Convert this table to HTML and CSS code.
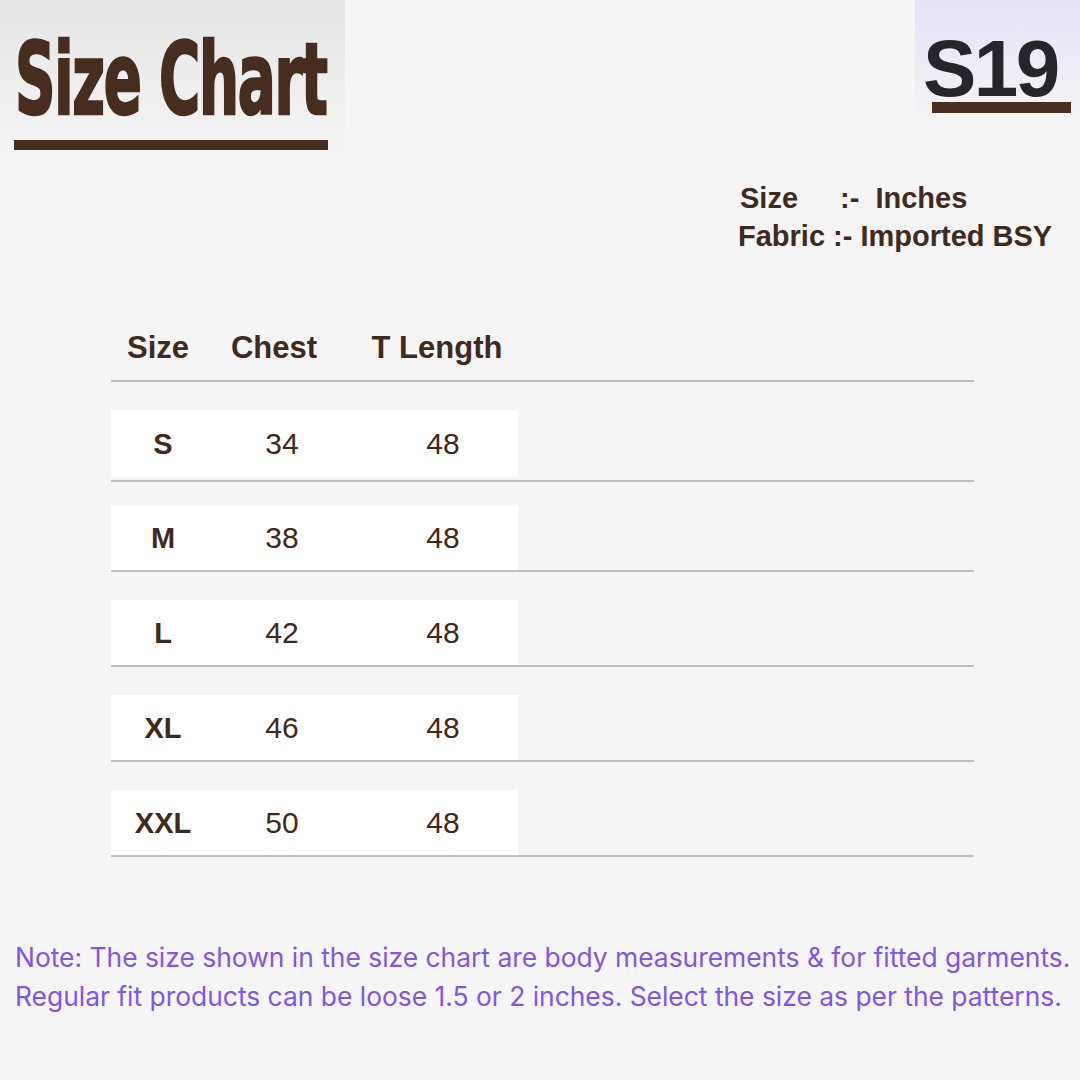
FILE: index.html
```html
<!DOCTYPE html>
<html lang="en">
<head>
<meta charset="utf-8">
<title>Size Chart S19</title>
<link rel="stylesheet" href="styles.css">
</head>
<body>
<div class="page">
  <header class="top">
    <div class="title-box">
      <h1 class="title">Size Chart</h1>
      <div class="title-bar"></div>
    </div>
    <div class="code-box">
      <div class="code">S19</div>
      <div class="code-bar"></div>
    </div>
  </header>

  <div class="meta">
    <div class="meta-line"><span class="meta-key">Size</span>:-  Inches</div>
    <div class="meta-line">Fabric :- Imported BSY</div>
  </div>

  <div class="table">
    <div class="thead">
      <div class="cell">Size</div>
      <div class="cell">Chest</div>
      <div class="cell">T Length</div>
    </div>
    <div class="row row-first"><div class="row-box"><div class="cell size">S</div><div class="cell">34</div><div class="cell">48</div></div></div>
    <div class="row row-second"><div class="row-box"><div class="cell size">M</div><div class="cell">38</div><div class="cell">48</div></div></div>
    <div class="row"><div class="row-box"><div class="cell size">L</div><div class="cell">42</div><div class="cell">48</div></div></div>
    <div class="row"><div class="row-box"><div class="cell size">XL</div><div class="cell">46</div><div class="cell">48</div></div></div>
    <div class="row"><div class="row-box"><div class="cell size">XXL</div><div class="cell">50</div><div class="cell">48</div></div></div>
  </div>

  <p class="note">Note: The size shown in the size chart are body measurements &amp; for fitted garments.<br>Regular fit products can be loose 1.5 or 2 inches. Select the size as per the patterns.</p>
</div>
</body>
</html>
```

FILE: styles.css
```css
* { box-sizing: border-box; }
html, body { margin: 0; padding: 0; }
body {
  background: #f5f5f5;
  width: 1080px;
  height: 1080px;
  overflow: hidden;
  font-family: "Liberation Sans", Arial, sans-serif;
  color: #40291d;
}
.page { width: 1080px; height: 1080px; }

.top {
  display: flex;
  justify-content: space-between;
  align-items: flex-start;
}
.title-box {
  width: 345px;
  height: 160px;
  padding-top: 30px;
  background: linear-gradient(180deg, #e4e4e4 0%, #eeeeee 50%, #f4f4f4 100%);
}
.title {
  margin: 0 0 0 15px;
  font-family: "DejaVu Sans Condensed", "DejaVu Sans", sans-serif;
  font-stretch: condensed;
  font-weight: bold;
  font-size: 100px;
  line-height: 100px;
  color: #472d20;
  -webkit-text-stroke: 2.5px #472d20;
  white-space: nowrap;
  transform: scaleX(0.625);
  transform-origin: left center;
  letter-spacing: -2px;
}
.title-bar {
  margin: 10px 0 0 14px;
  width: 314px;
  height: 10px;
  background: #472d20;
}

.code-box {
  width: 165px;
  height: 118px;
  padding-top: 36px;
  background: linear-gradient(180deg, #e7e2f8 0%, #eeecf6 55%, #f4f4f5 100%);
}
.code {
  padding-left: 8px;
  font-weight: bold;
  font-size: 80px;
  line-height: 66px;
  letter-spacing: -2.5px;
  color: #27252b;
}
.code-bar {
  margin-left: 17px;
  width: 139px;
  height: 11px;
  background: #472f22;
}

.meta {
  margin: 19px 0 0 738px;
  font-weight: bold;
  font-size: 29px;
  line-height: 38px;
  color: #40291d;
}
.meta-line { white-space: pre; }
.meta-key {
  display: inline-block;
  width: 102px;
  padding-left: 2px;
}

.table {
  margin: 73px 0 0 111px;
  width: 863px;
}
.thead {
  display: grid;
  grid-template-columns: 94px 138px 188px;
  height: 54px;
  border-bottom: 2px solid #bcbcbc;
  font-weight: bold;
  font-size: 31px;
  line-height: 40px;
  color: #40291d;
}
.cell { text-align: center; white-space: nowrap; }
.row {
  margin-top: 28px;
  border-bottom: 2px solid #bfbfbf;
}
.row-first { padding-bottom: 3px; }
.row-first .row-box { height: 67px; }
.row-second { margin-top: 23px; }
.row-box {
  width: 407px;
  height: 65px;
  background: #ffffff;
  display: grid;
  grid-template-columns: 104px 134px 188px;
  align-items: center;
  font-size: 30px;
  color: #40291d;
}
.row-box .cell { line-height: 30px; }
.cell.size { font-weight: bold; font-size: 29px; }

.note {
  margin: 81px 0 0 15px;
  font-family: Inter, "Noto Sans", sans-serif;
  font-size: 26.4px;
  line-height: 39px;
  color: #8256e6;
  white-space: nowrap;
}
```
